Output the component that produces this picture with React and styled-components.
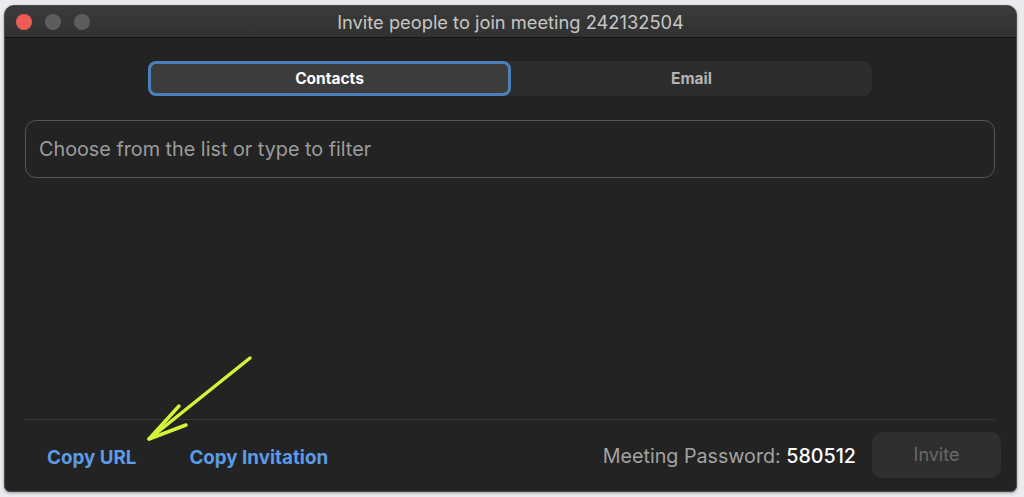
import React from "react";
import styled, { createGlobalStyle } from "styled-components";

const Global = createGlobalStyle`
  html, body { margin: 0; padding: 0; background: #ebebef; }
  body { font-family: "Inter", "Liberation Sans", sans-serif; }
`;

const Page = styled.div`
  width: 1024px;
  height: 497px;
  box-sizing: border-box;
  padding: 5px 0 0 4px;
  background: #ebebef;
`;

const Window = styled.div`
  position: relative;
  width: 1013px;
  height: 487px;
  box-sizing: border-box;
  background: #232323;
  border: 1px solid #4a4a4a;
  border-radius: 10px 10px 6px 6px;
  overflow: hidden;
  display: flex;
  flex-direction: column;
  box-shadow: 0 1px 3px rgba(0,0,0,0.35);
`;

const TitleBar = styled.div`
  position: relative;
  height: 31px;
  flex: none;
  display: flex;
  align-items: center;
  justify-content: center;
  background: linear-gradient(#3b3b3b, #313131);
  border-bottom: 1px solid #141414;
`;

const Lights = styled.div`
  position: absolute;
  left: 11px;
  top: 8px;
  display: flex;
  gap: 13px;
`;

const Light = styled.span`
  width: 16px;
  height: 16px;
  border-radius: 50%;
  background: ${(p) => p.$color};
`;

const Title = styled.div`
  color: #c6c6c6;
  font-size: 18.3px;
  padding-top: 1px;
`;

const Body = styled.div`
  flex: 1;
  display: flex;
  flex-direction: column;
  padding: 23px 21px 0 20px;
`;

const Segmented = styled.div`
  align-self: center;
  width: 724px;
  height: 35px;
  display: flex;
  background: #2d2d2d;
  border-radius: 9px;
`;

const Segment = styled.div`
  flex: 0 0 ${(p) => p.$w}px;
  box-sizing: border-box;
  display: flex;
  align-items: center;
  justify-content: center;
  font-size: 15.5px;
  font-weight: 700;
  color: ${(p) => (p.$active ? "#ffffff" : "#b4b4b4")};
  background: ${(p) => (p.$active ? "#3c3c3c" : "transparent")};
  border: ${(p) => (p.$active ? "3px solid #4b80b8" : "none")};
  border-radius: 8px;
`;

const Input = styled.div`
  margin-top: 24px;
  height: 58px;
  box-sizing: border-box;
  border: 1.5px solid #545454;
  border-radius: 11px;
  display: flex;
  align-items: center;
  padding-left: 13px;
  color: #9c9c9c;
  font-size: 19.8px;
`;

const Spacer = styled.div`
  flex: 1;
`;

const Divider = styled.div`
  height: 1px;
  background: #383838;
`;

const Footer = styled.div`
  height: 71px;
  display: flex;
  align-items: center;
  padding-bottom: 2px;
  box-sizing: border-box;
`;

const LinkBtn = styled.span`
  color: #5c9be6;
  font-size: 18.8px;
  font-weight: 700;
  margin-left: ${(p) => p.$ml}px;
  padding-top: 5px;
`;

const Password = styled.span`
  color: #a2a2a2;
  font-size: 19.7px;
  padding-top: 3px;
  b {
    color: #ffffff;
    font-weight: 500;
  }
`;

const InviteBtn = styled.div`
  margin-left: 16px;
  margin-right: -6px;
  width: 129px;
  height: 46px;
  border-radius: 10px;
  background: #2f2f2f;
  color: #6a6a6a;
  font-size: 18px;
  display: flex;
  align-items: center;
  justify-content: center;
`;

const ArrowSvg = styled.svg`
  position: absolute;
  left: 0;
  top: 0;
  pointer-events: none;
`;

export default function App() {
  return (
    <>
      <Global />
      <Page>
        <Window>
          <TitleBar>
            <Lights>
              <Light $color="#ee5b55" />
              <Light $color="#5d5d5d" />
              <Light $color="#5d5d5d" />
            </Lights>
            <Title>Invite people to join meeting 242132504</Title>
          </TitleBar>
          <Body>
            <Segmented>
              <Segment $active $w={363}>Contacts</Segment>
              <Segment $w={361}>Email</Segment>
            </Segmented>
            <Input>Choose from the list or type to filter</Input>
            <Spacer />
            <Divider />
            <Footer>
              <LinkBtn $ml={22}>Copy URL</LinkBtn>
              <LinkBtn $ml={53}>Copy Invitation</LinkBtn>
              <Spacer />
              <Password>
                Meeting Password: <b>580512</b>
              </Password>
              <InviteBtn>Invite</InviteBtn>
            </Footer>
          </Body>
          <ArrowSvg width="1013" height="487" viewBox="4 5 1013 487">
            <g
              fill="none"
              stroke="#d2f53a"
              strokeWidth="3.5"
              strokeLinecap="round"
              strokeLinejoin="round"
            >
              <path d="M249 357 L148 438" />
              <path d="M178 405 L148 438 L185 424" />
            </g>
          </ArrowSvg>
        </Window>
      </Page>
    </>
  );
}
